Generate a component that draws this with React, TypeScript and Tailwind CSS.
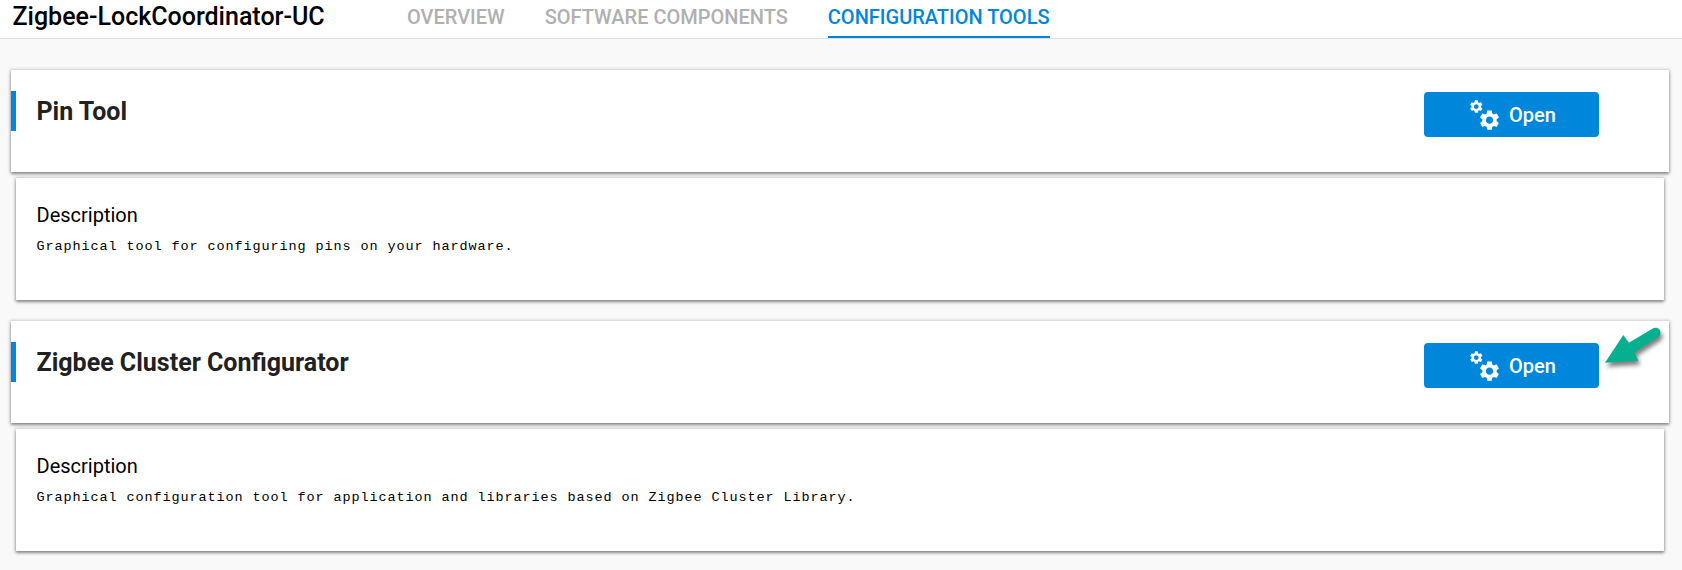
import React from "react";

const GEAR =
  "M19.14 12.94c.04-.3.06-.61.06-.94 0-.32-.02-.64-.07-.94l2.03-1.58c.18-.14.23-.41.12-.61l-1.92-3.32c-.12-.22-.37-.29-.59-.22l-2.39.96c-.5-.38-1.03-.7-1.62-.94l-.36-2.54c-.04-.24-.24-.41-.48-.41h-3.84c-.24 0-.43.17-.47.41l-.36 2.54c-.59.24-1.13.57-1.62.94l-2.39-.96c-.22-.08-.47 0-.59.22L2.74 8.87c-.12.21-.08.47.12.61l2.03 1.58c-.05.3-.09.63-.09.94s.02.64.07.94l-2.03 1.58c-.18.14-.23.41-.12.61l1.92 3.32c.12.22.37.29.59.22l2.39-.96c.5.38 1.03.7 1.62.94l.36 2.54c.05.24.24.41.48.41h3.84c.24 0 .44-.17.47-.41l.36-2.54c.59-.24 1.13-.56 1.62-.94l2.39.96c.22.08.47 0 .59-.22l1.92-3.32c.12-.22.07-.47-.12-.61l-2.01-1.58zM12 15.6c-1.98 0-3.6-1.62-3.6-3.6s1.62-3.6 3.6-3.6 3.6 1.62 3.6 3.6-1.62 3.6-3.6 3.6z";

function GearsIcon() {
  return (
    <svg width="31" height="32" viewBox="0 0 31 32" fill="currentColor" aria-hidden="true">
      <path d={GEAR} transform="translate(-1.5 -0.2) scale(0.65)" />
      <path d={GEAR} transform="translate(7.5 9.2)" />
    </svg>
  );
}

function Pointer() {
  return (
    <svg
      className="absolute top-[8px] right-[6px] overflow-visible drop-shadow-[2px_4px_2px_rgba(0,0,0,0.5)]"
      width="58"
      height="34"
      viewBox="0 0 58 34"
      aria-hidden="true"
    >
      <path
        d="M0 33.7 L18.3 6 L23.8 13.8 L47.8 -0.6 A5 5 0 0 1 53 8 L29.5 23.3 L33.3 31.7 Z"
        fill="#05b090"
      />
    </svg>
  );
}

const SHADOW = "shadow-[0_2px_3px_rgba(0,0,0,0.4),0_0_3px_1px_rgba(0,0,0,0.15)]";

type ToolProps = { name: string; description: string; highlighted?: boolean };

function Tool({ name, description, highlighted = false }: ToolProps) {
  return (
    <section className="flex flex-col">
      <div className={`relative flex h-[102px] items-start justify-between bg-white pt-[21px] pr-[70px] ${SHADOW}`}>
        <h2 className="flex h-10 items-center border-l-[5px] border-[#0087dc] pt-px pl-[20.5px] text-[25px] font-bold text-[#212121]">
          {name}
        </h2>
        <button className="mt-px flex h-[45px] w-[175px] items-center justify-center gap-2 rounded bg-[#0087dc] pl-[3px] text-[20px] font-medium text-white">
          <GearsIcon />
          Open
        </button>
        {highlighted && <Pointer />}
      </div>
      <div className={`mx-[5px] mt-1.5 h-[122px] bg-white px-[20.5px] pt-[23px] text-black ${SHADOW}`}>
        <h3 className="text-[20px] leading-[28px]">Description</h3>
        <p className="mt-[7px] font-['Liberation_Mono',monospace] text-[13.5px] leading-[22px] tracking-[0.9px]">
          {description}
        </p>
      </div>
    </section>
  );
}

const TABS = ["OVERVIEW", "SOFTWARE COMPONENTS", "CONFIGURATION TOOLS"];

export default function App() {
  return (
    <div className="h-[570px] overflow-hidden bg-[#f9f9f9] font-['Roboto',sans-serif]">
      <header className="flex h-[39px] border-b border-[#dcdcdc] bg-white pl-[12.5px]">
        <h1 className="w-[394.5px] text-[25px] leading-[34px] font-medium text-black">Zigbee-LockCoordinator-UC</h1>
        <nav className="flex gap-10 text-[20px] leading-[34px] font-medium text-[#b0b0b0]">
          {TABS.map((tab, i) => (
            <a key={tab} className={i === 2 ? "border-b-2 border-[#0087dc] text-[#0087dc]" : ""}>
              {tab}
            </a>
          ))}
        </nav>
      </header>
      <main className="flex flex-col gap-[21px] pt-[31px] pr-[13px] pl-[11px]">
        <Tool name="Pin Tool" description="Graphical tool for configuring pins on your hardware." />
        <Tool
          name="Zigbee Cluster Configurator"
          description="Graphical configuration tool for application and libraries based on Zigbee Cluster Library."
          highlighted
        />
      </main>
    </div>
  );
}
